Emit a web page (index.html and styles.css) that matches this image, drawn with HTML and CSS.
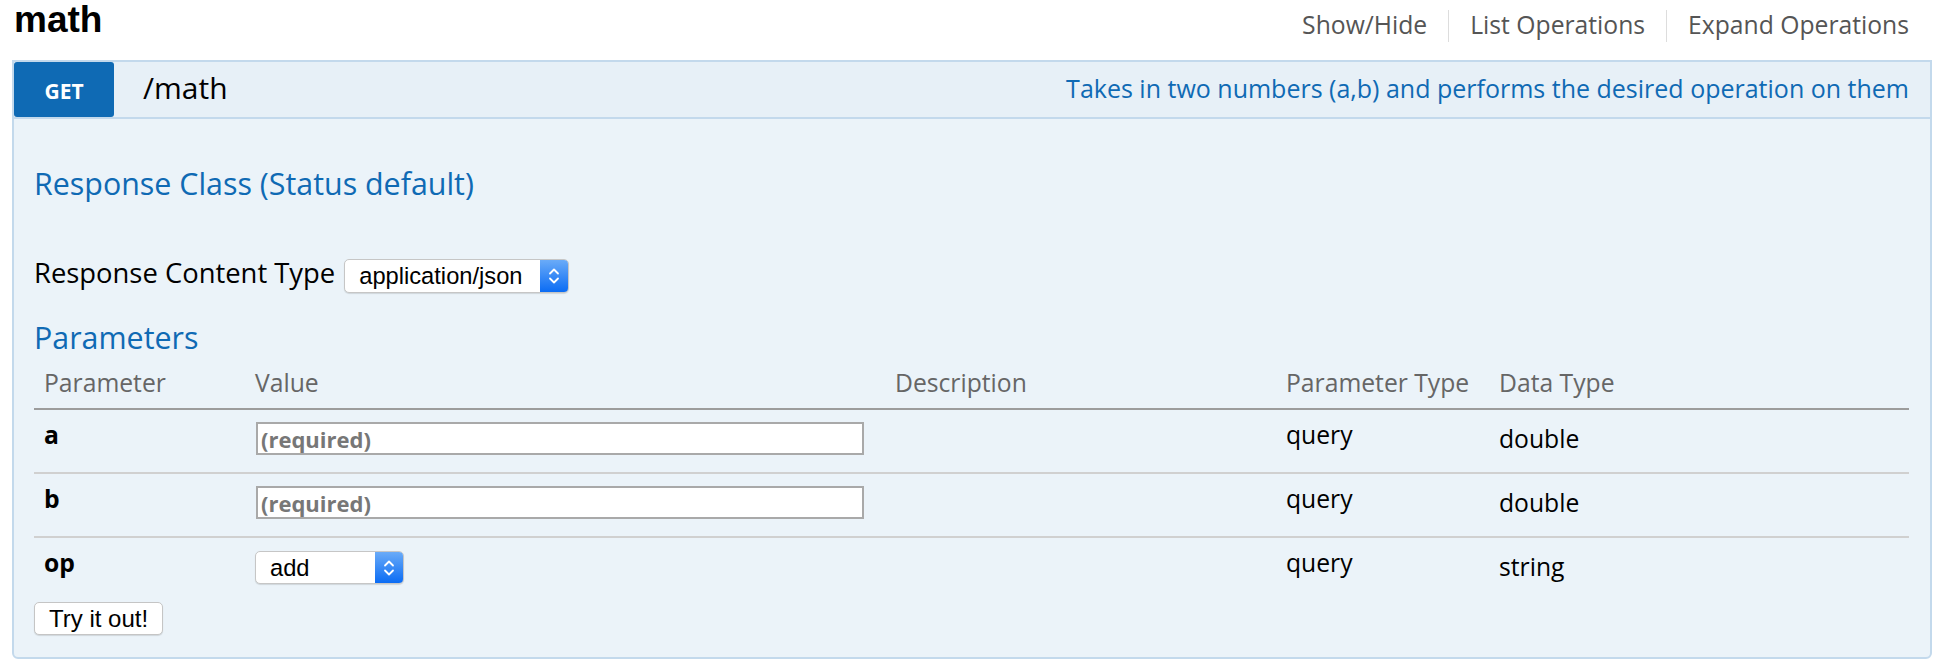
FILE: index.html
```html
<!DOCTYPE html>
<html lang="en">
<head>
<meta charset="utf-8">
<title>math</title>
<link rel="stylesheet" href="styles.css">
</head>
<body>
<div class="page">
  <div class="resource-heading">
    <h2 class="title">math</h2>
    <ul class="options">
      <li>Show/Hide</li>
      <li>List Operations</li>
      <li>Expand Operations</li>
    </ul>
  </div>
  <div class="operation">
    <div class="op-heading">
      <span class="method">GET</span>
      <span class="path">/math</span>
      <span class="summary">Takes in two numbers (a,b) and performs the desired operation on them</span>
    </div>
    <div class="op-content">
      <h4 class="section-title">Response Class (Status default)</h4>
      <div class="content-type">
        <label class="ct-label">Response Content Type</label>
        <div class="select select-ct">
          <select><option>application/json</option></select>
          <span class="select-arrow"><svg width="12" height="22" viewBox="0 0 12 22"><polyline points="2,8.5 6,4.5 10,8.5" fill="none" stroke="#fff" stroke-width="1.8" stroke-linecap="round" stroke-linejoin="round"/><polyline points="2,13.5 6,17.5 10,13.5" fill="none" stroke="#fff" stroke-width="1.8" stroke-linecap="round" stroke-linejoin="round"/></svg></span>
        </div>
      </div>
      <h4 class="section-title params-title">Parameters</h4>
      <table class="params">
        <colgroup>
          <col class="c-param"><col class="c-value"><col class="c-desc"><col class="c-ptype"><col>
        </colgroup>
        <thead>
          <tr><th>Parameter</th><th>Value</th><th>Description</th><th>Parameter Type</th><th>Data Type</th></tr>
        </thead>
        <tbody>
          <tr>
            <td class="name">a</td>
            <td><input class="text-input" type="text" placeholder="(required)"></td>
            <td></td>
            <td>query</td>
            <td class="dtype">double</td>
          </tr>
          <tr>
            <td class="name">b</td>
            <td><input class="text-input" type="text" placeholder="(required)"></td>
            <td></td>
            <td>query</td>
            <td class="dtype">double</td>
          </tr>
          <tr>
            <td class="name">op</td>
            <td>
              <div class="select select-op">
                <select><option>add</option></select>
                <span class="select-arrow"><svg width="12" height="22" viewBox="0 0 12 22"><polyline points="2,8.5 6,4.5 10,8.5" fill="none" stroke="#fff" stroke-width="1.8" stroke-linecap="round" stroke-linejoin="round"/><polyline points="2,13.5 6,17.5 10,13.5" fill="none" stroke="#fff" stroke-width="1.8" stroke-linecap="round" stroke-linejoin="round"/></svg></span>
              </div>
            </td>
            <td></td>
            <td>query</td>
            <td class="dtype">string</td>
          </tr>
        </tbody>
      </table>
      <button class="try" type="button">Try it out!</button>
    </div>
  </div>
</div>
</body>
</html>
```
FILE: styles.css
```css
html, body {
  margin: 0;
  padding: 0;
  background: #ffffff;
}

body {
  font-family: "Open Sans", "DejaVu Sans", sans-serif;
  color: #000;
}

.page {
  padding: 0 22px 0 12px;
}

.resource-heading {
  display: flex;
  justify-content: space-between;
  align-items: flex-start;
  height: 60px;
}

.title {
  margin: 0;
  padding-left: 2px;
  font-family: "Liberation Sans", Arial, sans-serif;
  font-weight: bold;
  font-size: 37px;
  line-height: 40px;
  color: #000;
}

.options {
  list-style: none;
  margin: 10px 0 0;
  padding: 0 23px 0 0;
  display: flex;
}

.options li {
  font-size: 24.7px;
  line-height: 27px;
  height: 27px;
  padding: 1px 21px 4px 21px;
  border-left: 1px solid #dddddd;
  color: #555555;
}

.options li:first-child {
  border-left: none;
}

.options li:last-child {
  padding-right: 0;
}

.operation {
  border: 2px solid #c3d9ec;
  border-radius: 0 0 6px 6px;
  background: #ebf3f9;
}

.op-heading {
  display: flex;
  align-items: center;
  height: 55px;
  background: #e7f0f7;
  border-bottom: 2px solid #c3d9ec;
  padding-right: 21px;
}

.method {
  align-self: stretch;
  width: 100px;
  background: #0f6ab4;
  color: #ffffff;
  border-radius: 3px;
  font-weight: bold;
  font-size: 21px;
  display: flex;
  align-items: center;
  justify-content: center;
  padding-top: 3px;
  box-sizing: border-box;
}

.path {
  font-size: 30px;
  margin-left: 29px;
  margin-bottom: 4px;
  color: #000;
}

.summary {
  margin-left: auto;
  margin-bottom: 4px;
  font-size: 25px;
  color: #0f6ab4;
}

.op-content {
  padding: 44px 21px 22px 20px;
}

.section-title {
  margin: 0;
  font-size: 30.4px;
  font-weight: normal;
  line-height: 41px;
  color: #0f6ab4;
}

.content-type {
  display: flex;
  align-items: flex-start;
  gap: 9px;
  margin-top: 55px;
}

.ct-label {
  font-size: 27.4px;
  line-height: 27px;
  color: #000;
}

.select {
  display: flex;
  box-sizing: border-box;
  border: 1px solid #c6c6c6;
  border-radius: 5px;
  background: #ffffff;
  overflow: hidden;
  box-shadow: 0 1px 1px rgba(0, 0, 0, 0.12);
}

.select select {
  -webkit-appearance: none;
  appearance: none;
  flex: 1;
  min-width: 0;
  border: none;
  outline: none;
  background: transparent;
  font-family: "Liberation Sans", Arial, sans-serif;
  font-size: 23.7px;
  color: #000;
  padding: 0 0 0 14px;
  margin: 0;
}

.select-arrow {
  width: 28px;
  flex: none;
  background: linear-gradient(#6aabf8, #0b6cf4);
  display: flex;
  align-items: center;
  justify-content: center;
}

.select-ct {
  width: 225px;
  height: 34px;
}

.select-op {
  width: 149px;
  height: 33px;
  margin-top: 3px;
}

.params-title {
  margin-top: 24px;
}

.params {
  margin-top: 10px;
  width: 100%;
  border-collapse: collapse;
  table-layout: fixed;
}

.c-param { width: 211px; }
.c-value { width: 640px; }
.c-desc { width: 391px; }
.c-ptype { width: 213px; }

.params th {
  text-align: left;
  font-weight: normal;
  color: #666666;
  font-size: 24.7px;
  line-height: 30px;
  padding: 0 10px 10px;
  border-bottom: 2px solid #9c9c9c;
  white-space: nowrap;
}

.params td {
  vertical-align: top;
  padding: 10px 10px 17px;
  font-size: 24.7px;
  line-height: 30px;
  color: #000;
  border-bottom: 2px solid #d0d0d0;
}

.params tbody tr:last-child td {
  border-bottom: none;
}

.params td.name {
  font-weight: bold;
}

.params td.dtype {
  padding-top: 14px;
}

.text-input {
  display: block;
  width: 608px;
  height: 33px;
  margin: 2px 0 0 1px;
  box-sizing: border-box;
  border: 2px solid #a9a9a9;
  background: #ffffff;
  padding: 0 3px;
  font-family: "Open Sans", sans-serif;
  font-weight: bold;
  font-size: 22px;
  outline: none;
}

.text-input::placeholder {
  color: #777777;
  opacity: 1;
}

.try {
  display: block;
  margin-top: 1px;
  height: 33px;
  padding: 0 14px;
  box-sizing: border-box;
  font-family: "Liberation Sans", Arial, sans-serif;
  font-size: 24px;
  color: #000;
  background: #ffffff;
  border: 1px solid #c5c5c5;
  border-radius: 5px;
  box-shadow: 0 1px 1px rgba(0, 0, 0, 0.12);
}
```
